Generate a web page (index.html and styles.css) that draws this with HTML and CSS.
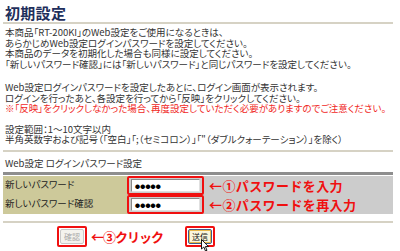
FILE: index.html
```html
<!DOCTYPE html>
<html lang="ja">
<head>
<meta charset="utf-8">
<link rel="stylesheet" href="styles.css">
</head>
<body>
<div class="page">
  <h1 class="title">初期設定</h1>
  <div class="rule"></div>
  <p class="para p1">本商品「RT-200KI」のWeb設定をご使用になるときは、<br>あらかじめWeb設定ログインパスワードを設定してください。<br>本商品のデータを初期化した場合も同様に設定してください。<br>「新しいパスワード確認」には「新しいパスワード」と同じパスワードを設定してください。</p>
  <p class="para p2">Web設定ログインパスワードを設定したあとに、ログイン画面が表示されます。<br>ログインを行ったあと、各設定を行ってから「反映」をクリックしてください。<br><span class="warn">※「反映」をクリックしなかった場合、再度設定していただく必要がありますのでご注意ください。</span></p>
  <p class="para p3">設定範囲：1～10文字以内<br>半角英数字および記号（「空白」「;（セミコロン）」「"（ダブルクォーテーション）」を除く）</p>
  <div class="rule rule2"></div>
  <div class="section">Web設定 ログインパスワード設定</div>
  <div class="table">
    <div class="bar"></div>
    <div class="row">
      <div class="label">新しいパスワード</div>
      <div class="value">
        <span class="mark"><span class="input">●●●●●</span></span>
        <span class="note">←①パスワードを入力</span>
      </div>
    </div>
    <div class="row">
      <div class="label">新しいパスワード確認</div>
      <div class="value">
        <span class="mark"><span class="input">●●●●●</span></span>
        <span class="note">←②パスワードを再入力</span>
      </div>
    </div>
  </div>
  <div class="rule rule3"></div>
  <div class="buttons">
    <span class="mark bmark"><span class="btn disabled">確認</span></span>
    <span class="note note3">←③クリック</span>
    <span class="mark bmark send"><span class="btn hover">送信</span>
      <svg class="cursor" width="9" height="13" viewBox="0 0 9 13"><path d="M0.5 0.5 L0.5 10 L2.8 8 L4.5 12 L6 11.3 L4.4 7.6 L7.5 7.6 Z" fill="#fff" stroke="#000" stroke-width="0.9"/></svg>
    </span>
  </div>
</div>
</body>
</html>
```
FILE: styles.css
```css
html, body {
  margin: 0;
  padding: 0;
  background: #fff;
}
body {
  width: 400px;
  height: 251px;
  overflow: hidden;
  font-family: "Noto Sans CJK JP", "Liberation Sans", sans-serif;
  color: #333;
}
.page {
  padding: 0 7px 0 3px;
}
.title {
  margin: 0;
  padding: 3px 0 0 2px;
  height: 19px;
  font-size: 15px;
  line-height: 19px;
  font-weight: bold;
  color: #1f2f5c;
  letter-spacing: 0.3px;
}
.rule {
  height: 2px;
  background: #d6d2c4;
}
.para {
  margin: 0;
  padding-left: 2px;
  font-size: 9.5px;
  line-height: 10.5px;
  font-feature-settings: "palt";
  white-space: nowrap;
}
.p1 { margin-top: 3px; }
.p2 { margin-top: 13px; }
.p3 { margin-top: 10px; }
.warn { color: #f0281e; }
.rule2 { margin-top: 5px; }
.section {
  margin-top: 6px;
  padding-left: 2px;
  font-size: 9.5px;
  line-height: 11px;
  font-feature-settings: "palt";
}
.table {
  margin-top: 3px;
}
.bar {
  height: 3px;
  background: #8e8e8e;
  margin-bottom: 1px;
}
.row {
  display: grid;
  grid-template-columns: 124px 1fr;
  height: 17px;
  margin-bottom: 2px;
}
.label {
  background: #cdc99a;
  font-size: 9.5px;
  line-height: 17px;
  padding-left: 2px;
  font-feature-settings: "palt";
  color: #222;
}
.value {
  background: #cccccc;
  display: flex;
  align-items: center;
  gap: 5px;
}
.mark {
  display: inline-flex;
  border: 2px solid #f01010;
  border-radius: 2px;
  padding: 1px 2px;
}
.input {
  display: block;
  width: 64px;
  height: 11px;
  background: #fff;
  border: 1px solid;
  border-color: #8a8a8a #e0e0e0 #e0e0e0 #8a8a8a;
  font-size: 5px;
  line-height: 11px;
  padding-left: 3px;
  color: #000;
  letter-spacing: 0.2px;
}
.note {
  color: #f01010;
  font-weight: bold;
  font-size: 13px;
  line-height: 17px;
  letter-spacing: 0.4px;
  white-space: nowrap;
}
.rule3 { margin-top: 9px; }
.buttons {
  display: flex;
  align-items: center;
  padding-left: 54px;
  margin-top: 3px;
}
.bmark {
  padding: 1px;
}
.btn {
  display: block;
  font-size: 8px;
  line-height: 13px;
  height: 13px;
  padding: 0 3px;
  border: 1px solid #bbb;
  border-radius: 2px;
  background: #f4f3ee;
}
.disabled {
  color: #aaa;
  border-color: #c8c8c8;
}
.note3 {
  margin-left: 4px;
  font-size: 13px;
  letter-spacing: -1px;
}
.send {
  margin-left: 22px;
  position: relative;
}
.hover {
  color: #111;
  border-color: #3c5a8a;
  background: #fbf6dc;
  box-shadow: inset 0 0 0 1px #e8b84a;
}
.cursor {
  position: absolute;
  left: 14px;
  top: 11px;
}
```
